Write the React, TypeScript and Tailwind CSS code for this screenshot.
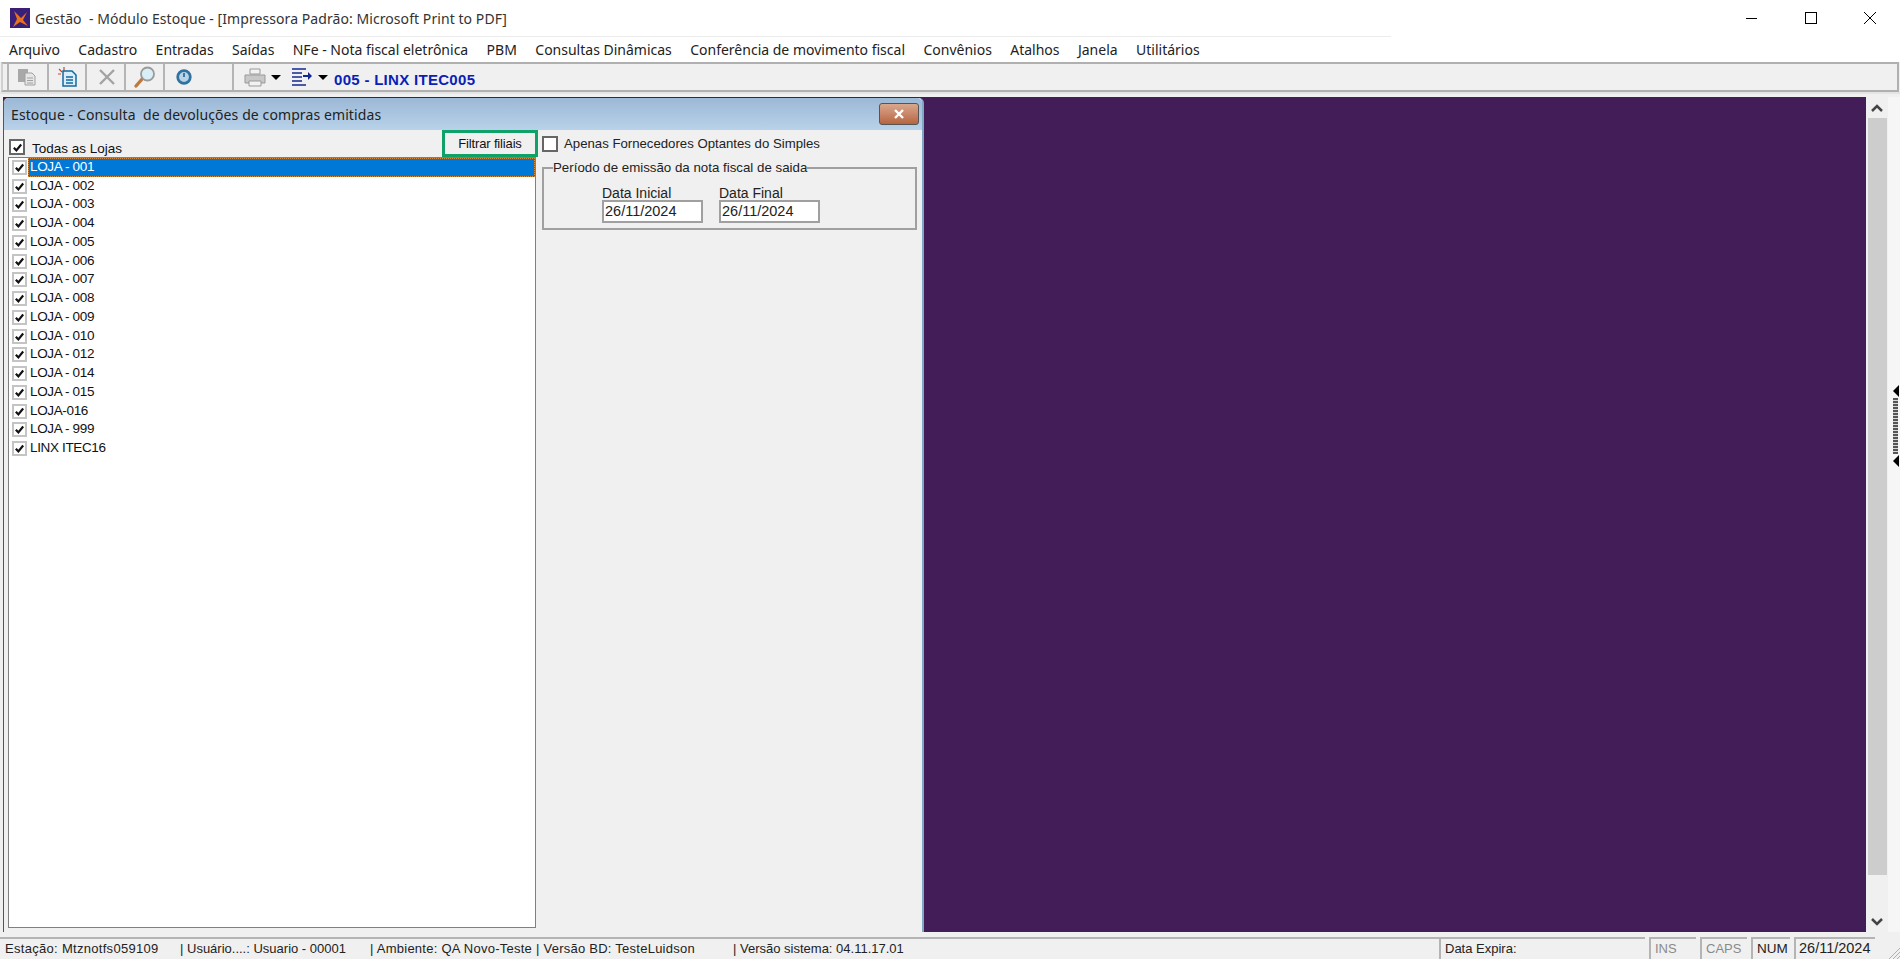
const menus = ['Arquivo', 'Cadastro', 'Entradas', 'Saídas', 'NFe - Nota fiscal eletrônica', 'PBM', 'Consultas Dinâmicas', 'Conferência de movimento fiscal', 'Convênios', 'Atalhos', 'Janela', 'Utilitários'];
const stores = ['LOJA - 001', 'LOJA - 002', 'LOJA - 003', 'LOJA - 004', 'LOJA - 005', 'LOJA - 006', 'LOJA - 007', 'LOJA - 008', 'LOJA - 009', 'LOJA - 010', 'LOJA - 012', 'LOJA - 014', 'LOJA - 015', 'LOJA-016', 'LOJA - 999', 'LINX ITEC16'];

function Check({ checked = true, large = false }: { checked?: boolean; large?: boolean }) {
  return (
    <span className={`flex shrink-0 items-center justify-center bg-white ${large ? 'h-[16px] w-[16px] border-2 border-[#666666]' : 'h-[15px] w-[15px] border-2 border-[#c4c4c4]'}`}>
      {checked && (
        <svg viewBox="0 0 12 12" className="h-[11px] w-[11px]">
          <path d="M2 6.200l2.800 3L10 2.800" fill="none" stroke="#111" strokeWidth="2.400" />
        </svg>
      )}
    </span>
  );
}

function Sep() {
  return <span className="h-[26px] w-[2px] shrink-0 bg-[#b5b5b5]" />;
}

function Caret() {
  return <span className="block h-0 w-0 shrink-0 border-x-[5px] border-t-[5px] border-x-transparent border-t-black" />;
}

function ToolBar() {
  return (
    <div className="mx-[1px] flex h-[30px] shrink-0 items-center border-2 border-[#b0b0b0] border-l-[#d0d0d0] bg-[#f0f0f0] pl-[4px]">
      <Sep />
      <svg viewBox="0 0 22 20" className="ml-[8px] h-[20px] w-[22px]">
        <rect x="1" y="2" width="10" height="13" fill="#a8a8a8" />
        <path d="M8 6h7l3 3v9H8z" fill="#e6e6e6" stroke="#a0a0a0" />
        <path d="M10 11h6M10 13.500h6M10 16h6" stroke="#a0a0a0" />
      </svg>
      <span className="w-[8px]" />
      <Sep />
      <svg viewBox="0 0 22 22" className="ml-[8px] h-[22px] w-[22px]">
        <path d="M2 3l3 3M7 1v4M1 8h3" stroke="#d1432c" strokeWidth="1.200" />
        <path d="M6 5h9l4 4v11H6z" fill="#d9eefa" stroke="#14699f" strokeWidth="1.500" />
        <path d="M9 11h7M9 14h7M9 17h7" stroke="#14699f" strokeWidth="1.500" />
      </svg>
      <span className="w-[6px]" />
      <Sep />
      <svg viewBox="0 0 20 20" className="ml-[10px] h-[20px] w-[20px]">
        <path d="M3 3l14 14M17 3L3 17" stroke="#a3a3a3" strokeWidth="2.400" />
      </svg>
      <span className="w-[7px]" />
      <Sep />
      <svg viewBox="0 0 24 24" className="ml-[7px] h-[24px] w-[24px]">
        <path d="M3 21l7-8" stroke="#c0793d" strokeWidth="3.400" strokeLinecap="round" />
        <circle cx="14.500" cy="9" r="6.500" fill="#d9eef7" stroke="#9a9a9a" strokeWidth="1.800" />
      </svg>
      <span className="w-[6px]" />
      <Sep />
      <svg viewBox="0 0 20 20" className="ml-[10px] h-[18px] w-[18px]">
        <circle cx="10" cy="10" r="7" fill="#b8d3e6" stroke="#2f719f" strokeWidth="3" />
        <path d="M10 5.500v4.500" stroke="#2f719f" strokeWidth="2" />
      </svg>
      <span className="w-[39px]" />
      <Sep />
      <svg viewBox="0 0 24 22" className="ml-[9px] h-[22px] w-[24px]">
        <path d="M7 3h10v5H7z" fill="#f2f2f2" stroke="#999" />
        <path d="M2 9h20v8H2z" fill="#c8c8c8" stroke="#999" />
        <path d="M6 15h12v5H6z" fill="#f2f2f2" stroke="#999" />
      </svg>
      <span className="ml-[4px]"><Caret /></span>
      <svg viewBox="0 0 22 20" className="ml-[10px] h-[20px] w-[22px]">
        <path d="M1 2h14M1 6h10M1 10h10M1 14h10M1 18h14" stroke="#14288f" strokeWidth="1.500" />
        <path d="M12 8h5V5l4 4-4 4v-3h-5z" fill="#14288f" />
      </svg>
      <span className="ml-[5px]"><Caret /></span>
      <span className="ml-[6px] mt-[6px] font-['Liberation_Sans',sans-serif] text-[15px] font-bold leading-[18px] tracking-[0.3px] text-[#0a1fb8]">005 - LINX ITEC005</span>
    </div>
  );
}

function ChildWindow() {
  return (
    <div className="flex shrink-0 bg-[#421d58] pt-[1px]">
      <div className="flex w-[921px] flex-col rounded-t-[5px] border-l border-r-2 border-l-[#555555] border-r-[#7fa8c4] bg-[#f0f0f0] font-['Liberation_Sans',sans-serif]">
        <div className="flex h-[32px] shrink-0 items-center justify-between rounded-t-[5px] bg-gradient-to-b from-[#9bb8d6] to-[#b9d2ea] pl-[7px] pr-[3px]">
          <span className="whitespace-pre font-['Noto_Sans',sans-serif] text-[14px] tracking-[0.1px] text-[#222222]">Estoque - Consulta  de devoluções de compras emitidas</span>
          <span className="flex h-[22px] w-[40px] items-center justify-center rounded-[3px] border border-[#555555] bg-gradient-to-b from-[#d8a88c] via-[#c9866a] to-[#b5653d]">
            <svg viewBox="0 0 12 10" className="h-[10px] w-[12px]">
              <path d="M2 1l8 8M10 1L2 9" stroke="#ffffff" strokeWidth="2.400" />
            </svg>
          </span>
        </div>
        <div className="flex min-h-0 flex-1">
          <div className="flex w-[534px] shrink-0 flex-col pl-[4px]">
            <div className="flex h-[27px] shrink-0 items-end pl-[1px]">
              <span className="mb-[2px]"><Check large /></span>
              <span className="ml-[7px] text-[13.5px] leading-[17px] text-[#111111]">Todas as Lojas</span>
              <span className="ml-auto flex h-[27px] w-[96px] items-center justify-center border-[3px] border-[#0ea268] text-[13px] tracking-[-0.15px] text-[#111111]">Filtrar filiais</span>
            </div>
            <div className="mb-[4px] mr-[2px] min-h-0 flex-1 border border-[#808080] bg-white">
              {stores.map((name, i) => (
                <div key={name} className="flex h-[18.75px] items-center gap-[1px] pl-[3px]">
                  <Check />
                  <span className={`flex h-full flex-1 items-center pb-[1px] pl-[2px] text-[13.5px] tracking-[-0.35px] ${i === 0 ? 'bg-[#0078d7] text-white outline-1 -outline-offset-1 outline-dotted outline-[#d98a3c]' : 'text-[#111111]'}`}>{name}</span>
                </div>
              ))}
            </div>
          </div>
          <div className="flex-1 pl-[4px] pr-[5px]">
            <div className="flex h-[27px] items-center gap-[6px] pt-[1px]">
              <Check checked={false} large />
              <span className="text-[13.2px] text-[#222222]">Apenas Fornecedores Optantes do Simples</span>
            </div>
            <fieldset className="mt-[3px] h-[70px] border-2 border-[#a0a0a0] pl-[9px]">
              <legend className="text-[13.3px] leading-[16px] text-[#222222]">Período de emissão da nota fiscal de saida</legend>
              <div className="ml-[49px] flex gap-[16px] pt-[10px]">
                {['Data Inicial', 'Data Final'].map((label) => (
                  <div key={label} className="w-[101px]">
                    <div className="text-[14px] leading-[14px] text-[#222222]">{label}</div>
                    <div className="flex h-[23px] items-center border-2 border-[#a0a0a0] bg-white pl-[1px] text-[14.5px] text-[#222222]">26/11/2024</div>
                  </div>
                ))}
              </div>
            </fieldset>
          </div>
        </div>
      </div>
    </div>
  );
}

function Workspace() {
  return (
    <div className="mb-[5px] flex min-h-0 flex-1 pl-[3px] pt-[3px]">
      <ChildWindow />
      <div className="flex-1 bg-[#421d58]" />
      <div className="flex w-[22px] shrink-0 flex-col items-center bg-[#f0f0f0]">
        <div className="flex h-[21px] shrink-0 items-center">
          <svg viewBox="0 0 12 8" className="h-[8px] w-[12px]"><path d="M1 7l5-5 5 5" fill="none" stroke="#444" strokeWidth="2.500" /></svg>
        </div>
        <div className="w-[19px] flex-1 bg-[#cdcdcd]" />
        <div className="mt-[36px] flex h-[21px] shrink-0 items-center">
          <svg viewBox="0 0 12 8" className="h-[8px] w-[12px]"><path d="M1 1l5 5 5-5" fill="none" stroke="#444" strokeWidth="2.500" /></svg>
        </div>
      </div>
      <div className="flex w-[12px] shrink-0 flex-col items-center bg-[#f6f6f6] pl-[3px] pt-[288px]">
        <span className="h-0 w-0 border-y-[6px] border-r-[6px] border-y-transparent border-r-black" />
        <span className="my-[1px] h-[56px] w-[5px] bg-[repeating-linear-gradient(0deg,#555555_0,#555555_2px,#d8d8d8_2px,#d8d8d8_3px)]" />
        <span className="h-0 w-0 border-y-[6px] border-r-[6px] border-y-transparent border-r-black" />
      </div>
    </div>
  );
}

function StatusBar() {
  const cell = 'flex h-full shrink-0 items-center border-l-2 border-t-2 border-[#b4b4b4] pl-[4px]';
  return (
    <div className="flex h-[22px] shrink-0 bg-[#f0f0f0] font-['Liberation_Sans',sans-serif] text-[13px] text-[#222222]">
      <div className="flex h-full w-[1439px] items-center overflow-hidden whitespace-pre border-t-2 border-[#b4b4b4] pl-[5px]">
        <span className="w-[175px] tracking-[0.3px]">Estação: Mtznotfs059109</span>
        <span className="w-[190px]">| Usuário....: Usuario - 00001</span>
        <span className="w-[363px] tracking-[0.25px]">| Ambiente: QA Novo-Teste | Versão BD: TesteLuidson</span>
        <span>| Versão sistema: 04.11.17.01</span>
      </div>
      <div className={`${cell} w-[206px]`}>Data Expira:</div>
      <div className={`${cell} ml-[4px] w-[47px] text-[#8a8a8a]`}>INS</div>
      <div className={`${cell} ml-[4px] w-[47px] text-[#8a8a8a]`}>CAPS</div>
      <div className={`${cell} ml-[4px] w-[39px] text-[13.5px]`}>NUM</div>
      <div className={`${cell} ml-[4px] w-[81px] !pl-[3px] text-[14.5px]`}>26/11/2024</div>
      <svg viewBox="0 0 14 14" className="ml-auto mt-auto h-[14px] w-[14px]">
        <path d="M3 14L14 3M7 14l7-7M11 14l3-3" stroke="#b0b0b0" />
      </svg>
    </div>
  );
}

export default function App() {
  return (
    <div className="flex h-[959px] w-[1900px] flex-col overflow-hidden bg-[#f0f0f0] font-['Noto_Sans','Open_Sans',sans-serif]">
      <div className="flex h-[36px] shrink-0 items-center bg-white">
        <svg viewBox="0 0 20 20" className="ml-[10px] h-[20px] w-[20px]">
          <rect width="20" height="20" fill="#3a1f78" />
          <path d="M4 3l7 7 6-6-4 8 5 6-8-4-7 5 4-8z" fill="#e8731f" />
        </svg>
        <span className="ml-[5px] whitespace-pre text-[14px] tracking-[0.07px] text-[#333333]">Gestão  - Módulo Estoque - [Impressora Padrão: Microsoft Print to PDF]</span>
        <div className="ml-auto flex h-full items-center pr-[1px]">
          <span className="flex w-[59px] justify-center"><span className="h-[1px] w-[11px] bg-black" /></span>
          <span className="flex w-[59px] justify-center"><span className="h-[12px] w-[12px] border border-black" /></span>
          <span className="flex w-[59px] justify-center">
            <svg viewBox="0 0 12 12" className="h-[12px] w-[12px]"><path d="M0 0l12 12M12 0L0 12" stroke="#000" /></svg>
          </span>
        </div>
      </div>
      <div className="flex h-[26px] shrink-0 flex-col bg-white text-[14px] text-[#222222]">
        <div className="h-[1px] w-[1391px] shrink-0 bg-[#ececec]" />
        <div className="flex flex-1 items-center gap-[18.4px] pl-[9px]">
          {menus.map((m) => <span key={m}>{m}</span>)}
        </div>
      </div>
      <ToolBar />
      <div className="h-[2px] shrink-0 bg-[#e4e4e4]" />
      <Workspace />
      <StatusBar />
    </div>
  );
}
